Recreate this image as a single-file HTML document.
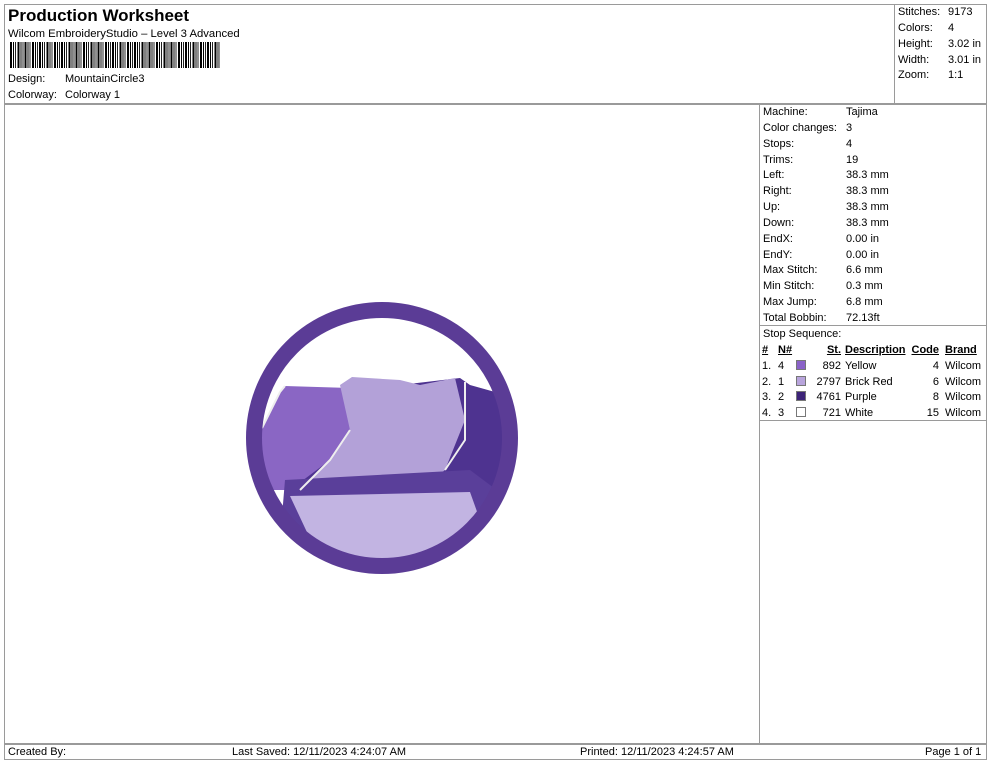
<!DOCTYPE html>
<html><head><meta charset="utf-8"><style>
*{margin:0;padding:0;box-sizing:border-box}
body{width:990px;height:762px;background:#fff;font-family:"Liberation Sans",Arial,sans-serif;font-size:11px;color:#000;position:relative;overflow:hidden}
.a{position:absolute;white-space:nowrap}
.l{position:absolute;background:#9a9a9a}
.bc{position:absolute;left:10px;top:42px;width:210px;height:26px;background:repeating-linear-gradient(90deg,#000 0 2px,#fff 2px 3px,#000 3px 4px,#fff 4px 5px,#222 5px 6px,#fff 6px 7.3px)}
.r{position:absolute;left:763px;line-height:15.85px;white-space:nowrap;width:220px}
.r div{height:15.85px;position:relative}
.r span{position:absolute;left:83px}
table{position:absolute;left:762px;top:343px;border-collapse:collapse;font-size:11px;line-height:15.8px}
td{padding:0;white-space:nowrap}
.sw{display:inline-block;width:10px;height:10px;border:1px solid #777;vertical-align:-1px}
</style></head><body>
<div class="l" style="left:4px;top:4px;width:982px;height:1px"></div>
<div class="l" style="left:4px;top:4px;width:1px;height:756px"></div>
<div class="l" style="left:986px;top:4px;width:1px;height:756px"></div>
<div class="l" style="left:4px;top:759px;width:982px;height:1px"></div>
<div class="l" style="left:4px;top:103px;width:982px;height:2px"></div>
<div class="l" style="left:894px;top:4px;width:1px;height:100px"></div>
<div class="l" style="left:759px;top:104px;width:1px;height:640px"></div>
<div class="l" style="left:759px;top:325px;width:227px;height:1px"></div>
<div class="l" style="left:759px;top:420px;width:227px;height:1px"></div>
<div class="l" style="left:4px;top:743px;width:982px;height:2px"></div>

<div class="a" style="left:8px;top:6px;font-size:17px;font-weight:bold">Production Worksheet</div>
<div class="a" style="left:8px;top:28px;font-size:11.3px">Wilcom EmbroideryStudio – Level 3 Advanced</div>
<div class="bc"></div>
<div class="a" style="left:8px;top:73px">Design:</div><div class="a" style="left:65px;top:73px">MountainCircle3</div>
<div class="a" style="left:8px;top:89px">Colorway:</div><div class="a" style="left:65px;top:89px">Colorway 1</div>

<div class="r" style="left:898px;top:5px;width:90px"><div>Stitches:</div><div>Colors:</div><div>Height:</div><div>Width:</div><div>Zoom:</div></div>
<div class="r" style="left:948px;top:5px;width:40px"><div>9173</div><div>4</div><div>3.02 in</div><div>3.01 in</div><div>1:1</div></div>

<div class="r" style="top:105px">
<div>Machine:<span>Tajima</span></div><div>Color changes:<span>3</span></div><div>Stops:<span>4</span></div><div>Trims:<span>19</span></div><div>Left:<span>38.3 mm</span></div><div>Right:<span>38.3 mm</span></div><div>Up:<span>38.3 mm</span></div><div>Down:<span>38.3 mm</span></div><div>EndX:<span>0.00 in</span></div><div>EndY:<span>0.00 in</span></div><div>Max Stitch:<span>6.6 mm</span></div><div>Min Stitch:<span>0.3 mm</span></div><div>Max Jump:<span>6.8 mm</span></div><div>Total Bobbin:<span>72.13ft</span></div><div>Stop Sequence:</div>
</div>
<table>
<tr style="font-weight:bold;text-decoration:underline"><td style="width:16px">#</td><td style="width:18px">N#</td><td style="width:14px"></td><td style="width:31px;text-align:right">St.</td><td style="width:68px;padding-left:4px">Description</td><td style="width:30px;text-align:right">Code</td><td style="padding-left:6px">Brand</td></tr>
<tr><td>1.</td><td>4</td><td><span class="sw" style="background:#8a62c8"></span></td><td style="text-align:right">892</td><td style="padding-left:4px">Yellow</td><td style="text-align:right">4</td><td style="padding-left:6px">Wilcom</td></tr>
<tr><td>2.</td><td>1</td><td><span class="sw" style="background:#b8a4dc"></span></td><td style="text-align:right">2797</td><td style="padding-left:4px">Brick Red</td><td style="text-align:right">6</td><td style="padding-left:6px">Wilcom</td></tr>
<tr><td>3.</td><td>2</td><td><span class="sw" style="background:#3d2478"></span></td><td style="text-align:right">4761</td><td style="padding-left:4px">Purple</td><td style="text-align:right">8</td><td style="padding-left:6px">Wilcom</td></tr>
<tr><td>4.</td><td>3</td><td><span class="sw" style="background:#fff"></span></td><td style="text-align:right">721</td><td style="padding-left:4px">White</td><td style="text-align:right">15</td><td style="padding-left:6px">Wilcom</td></tr>
</table>

<svg class="a" style="left:0;top:0" width="990" height="762">
<defs><clipPath id="c"><circle cx="382" cy="438" r="121"/></clipPath></defs>
<g clip-path="url(#c)">
<polygon points="262,428 280,392 285,386 350,388 350,430 330,470 300,490 262,490" fill="#8a66c4"/>
<polygon points="400,385 460,378 470,385 495,392 510,400 520,520 300,520 290,490 330,460 380,440" fill="#4e3390"/>
<polygon points="340,385 352,377 400,380 420,385 455,378 465,420 445,470 420,490 330,490 300,490 330,460 350,430" fill="#b3a1d8"/>
<polygon points="285,480 470,470 510,500 500,540 280,540" fill="#5a3f9a"/>
<polygon points="290,496 470,492 480,520 420,560 320,560" fill="#c2b4e2"/>
<polyline points="262,428 280,392 285,386" fill="none" stroke="#eee" stroke-width="2"/>
<polyline points="350,430 330,460 300,490" fill="none" stroke="#eee" stroke-width="2"/>
<polyline points="465,382 465,440 445,470" fill="none" stroke="#eee" stroke-width="2"/>
</g>
<circle cx="382" cy="438" r="128" fill="none" stroke="#5b3c96" stroke-width="16"/>
</svg>

<div class="a" style="left:8px;top:746px">Created By:</div>
<div class="a" style="left:232px;top:746px">Last Saved: 12/11/2023 4:24:07 AM</div>
<div class="a" style="left:580px;top:746px">Printed: 12/11/2023 4:24:57 AM</div>
<div class="a" style="left:925px;top:746px">Page 1 of 1</div>
</body></html>
